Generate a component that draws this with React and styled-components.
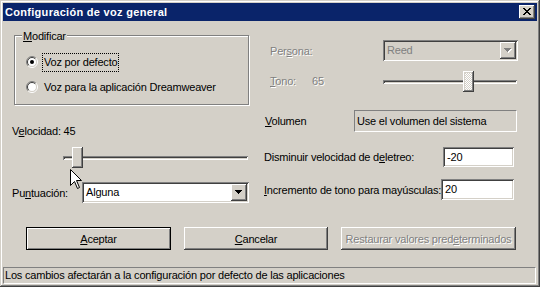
import React from "react";
import styled, { createGlobalStyle, css } from "styled-components";

const GlobalStyle = createGlobalStyle`
  html, body { margin: 0; padding: 0; background: #d4d0c8; overflow: hidden; }
  #root { width: 540px; height: 287px; }
`;

const raised = css`
  box-shadow: inset -1px -1px #404040, inset 1px 1px #fff, inset -2px -2px #808080, inset 2px 2px #d4d0c8;
`;
const sunken = css`
  box-shadow: inset 1px 1px #808080, inset -1px -1px #fff, inset 2px 2px #404040, inset -2px -2px #d4d0c8;
`;
const disabledText = css`
  color: #808080;
  text-shadow: 1px 1px #fff;
`;

const Window = styled.div`
  position: relative;
  box-sizing: border-box;
  width: 540px;
  height: 287px;
  padding: 3px;
  background: #d4d0c8;
  display: flex;
  flex-direction: column;
  box-shadow: inset -1px -1px #404040, inset 1px 1px #d4d0c8, inset -2px -2px #808080, inset 2px 2px #fff;
  font-family: "Liberation Sans", Arial, sans-serif;
  font-size: 11px;
  letter-spacing: -0.2px;
  color: #000;
  white-space: nowrap;
`;

const TitleBar = styled.div`
  flex: none;
  height: 18px;
  background: #0a246a;
  color: #fff;
  display: flex;
  align-items: center;
  justify-content: space-between;
  padding: 0 2px;
`;

const TitleText = styled.span`
  font-weight: bold;
  letter-spacing: 0.3px;
  line-height: 18px;
`;

const CloseButton = styled.div`
  width: 16px;
  height: 14px;
  background: #d4d0c8;
  ${raised};
  display: flex;
  align-items: center;
  justify-content: center;
  padding-bottom: 1px;
  box-sizing: border-box;
`;

const Main = styled.div`
  flex: none;
  height: 206px;
  display: flex;
  padding-left: 9px;
`;

const LeftCol = styled.div`
  width: 238px;
  display: flex;
  flex-direction: column;
`;

const RightCol = styled.div`
  width: 255px;
  margin-left: 13px;
  display: flex;
  flex-direction: column;
`;

const GroupBox = styled.div`
  position: relative;
  box-sizing: border-box;
  margin: 14px 0 0 2px;
  width: 235px;
  height: 70px;
  border: 1px solid #808080;
  box-shadow: inset 1px 1px #fff, 1px 1px #fff;
  padding: 17px 0 0 11px;
  display: flex;
  flex-direction: column;
  gap: 7px;
`;

const Legend = styled.span`
  position: absolute;
  top: -6px;
  left: 7px;
  padding: 0 1px;
  background: #d4d0c8;
  line-height: 13px;
`;

const RadioRow = styled.div`
  display: flex;
  align-items: center;
  height: 18px;
  gap: 5px;
`;

const RadioLabel = styled.span`
  padding: 1px 1px;
  line-height: 15px;
  outline: ${(p) => (p.$focused ? "1px dotted #000" : "none")};
`;

const U = styled.span`
  text-decoration: underline;
  text-underline-offset: 1px;
`;

const FieldLabel = styled.div`
  margin-top: ${(p) => p.$mt}px;
  line-height: 14px;
`;

const SliderWrap = styled.div`
  position: relative;
  flex: none;
  height: 22px;
  width: ${(p) => p.$w}px;
  margin-left: ${(p) => p.$ml || 0}px;
  margin-top: ${(p) => p.$mt || 0}px;
  display: flex;
  align-items: center;
`;

const Track = styled.div`
  width: 100%;
  height: 4px;
  margin-top: 1px;
  ${sunken};
`;

const Thumb = styled.div`
  position: absolute;
  top: 1px;
  left: ${(p) => p.$pos}px;
  width: 11px;
  height: 21px;
  box-sizing: border-box;
  background: #d4d0c8;
  ${(p) =>
    p.$disabled &&
    css`
      background-image: repeating-conic-gradient(#fff 0 25%, #d4d0c8 0 50%);
      background-size: 2px 2px;
    `}
  ${raised};
`;

const Row = styled.div`
  display: flex;
  align-items: center;
  flex: none;
  margin-top: ${(p) => p.$mt}px;
  height: ${(p) => p.$h}px;
`;

const RowLabel = styled.div`
  flex: none;
  box-sizing: border-box;
  width: ${(p) => p.$w}px;
  padding-left: ${(p) => p.$pl || 0}px;
  line-height: 14px;
  display: flex;
  white-space: nowrap;
  ${(p) => p.$disabled && disabledText};
`;

const TonoName = styled.span`
  width: 42px;
`;

const Combo = styled.div`
  box-sizing: border-box;
  width: ${(p) => p.$w}px;
  height: 21px;
  padding: 2px;
  display: flex;
  background: ${(p) => (p.$disabled ? "#d4d0c8" : "#fff")};
  ${sunken};
`;

const ComboText = styled.span`
  flex: 1;
  padding-left: 2px;
  line-height: 17px;
  color: ${(p) => (p.$disabled ? "#808080" : "#000")};
`;

const DropButton = styled.div`
  width: 16px;
  height: 17px;
  box-sizing: border-box;
  background: #d4d0c8;
  ${raised};
  display: flex;
  align-items: center;
  justify-content: center;
`;

const StaticBox = styled.div`
  box-sizing: border-box;
  width: ${(p) => p.$w}px;
  height: 22px;
  border-top: 1px solid #808080;
  border-left: 1px solid #808080;
  border-bottom: 1px solid #fff;
  border-right: 1px solid #fff;
  padding-left: 2px;
  line-height: 20px;
`;

const TextInput = styled.div`
  box-sizing: border-box;
  width: ${(p) => p.$w}px;
  height: ${(p) => p.$h}px;
  background: #fff;
  padding-left: 4px;
  line-height: ${(p) => p.$h}px;
  ${sunken};
`;

const ButtonRow = styled.div`
  flex: none;
  display: flex;
  gap: 13px;
  padding-left: 23px;
  height: 23px;
`;

const Button = styled.div`
  box-sizing: border-box;
  width: ${(p) => p.$w}px;
  height: 23px;
  display: flex;
  align-items: center;
  justify-content: center;
  background: #d4d0c8;
  ${(p) =>
    p.$default
      ? css`
          border: 1px solid #000;
          box-shadow: inset 1px 1px #fff, inset -1px -1px #808080;
        `
      : raised};
  ${(p) => p.$disabled && disabledText};
`;

const StatusBar = styled.div`
  margin-top: auto;
  margin-right: 1px;
  flex: none;
  box-sizing: border-box;
  height: 17px;
  border-top: 1px solid #808080;
  border-left: 1px solid #808080;
  border-bottom: 1px solid #fff;
  border-right: 1px solid #fff;
  padding-left: 1px;
  line-height: 15px;
`;

const Cursor = styled.svg`
  position: absolute;
  left: 70px;
  top: 169px;
`;

const CloseGlyph = () => (
  <svg width="8" height="7" viewBox="0 0 8 7" shapeRendering="crispEdges">
    {[
      [0, 0, 2], [6, 0, 2],
      [1, 1, 2], [5, 1, 2],
      [2, 2, 4],
      [3, 3, 2],
      [2, 4, 4],
      [1, 5, 2], [5, 5, 2],
      [0, 6, 2], [6, 6, 2],
    ].map(([x, y, w], i) => (
      <rect key={i} x={x} y={y} width={w} height="1" fill="#000" />
    ))}
  </svg>
);

const Arrow = ({ disabled }) => (
  <svg width="8" height="5" viewBox="0 0 8 5" shapeRendering="crispEdges">
    {disabled &&
      [0, 1, 2, 3].map((r) => (
        <rect key={"s" + r} x={r + 1} y={r + 1} width={7 - r * 2} height="1" fill="#fff" />
      ))}
    {[0, 1, 2, 3].map((r) => (
      <rect key={r} x={r} y={r} width={7 - r * 2} height="1" fill={disabled ? "#808080" : "#000"} />
    ))}
  </svg>
);

const Radio = ({ checked }) => (
  <svg width="12" height="12" viewBox="0 0 12 12">
    <circle cx="6" cy="6" r="4.5" fill="#fff" />
    <path d="M2.1 9.9 A5.5 5.5 0 0 1 9.9 2.1" stroke="#808080" fill="none" />
    <path d="M9.9 2.1 A5.5 5.5 0 0 1 2.1 9.9" stroke="#fff" fill="none" />
    <path d="M2.8 9.2 A4.5 4.5 0 0 1 9.2 2.8" stroke="#404040" fill="none" />
    <path d="M9.2 2.8 A4.5 4.5 0 0 1 2.8 9.2" stroke="#d4d0c8" fill="none" />
    {checked && <circle cx="6" cy="6" r="2" fill="#000" />}
  </svg>
);

export default function App() {
  return (
    <>
      <GlobalStyle />
      <Window>
        <TitleBar>
          <TitleText>Configuración de voz general</TitleText>
          <CloseButton>
            <CloseGlyph />
          </CloseButton>
        </TitleBar>

        <Main>
          <LeftCol>
            <GroupBox>
              <Legend>
                <U>M</U>odificar
              </Legend>
              <RadioRow>
                <Radio checked />
                <RadioLabel $focused>Voz por defecto</RadioLabel>
              </RadioRow>
              <RadioRow>
                <Radio />
                <RadioLabel>Voz para la aplicación Dreamweaver</RadioLabel>
              </RadioRow>
            </GroupBox>

            <FieldLabel $mt={19}>
              V<U>e</U>locidad: 45
            </FieldLabel>
            <SliderWrap $w={185} $ml={51} $mt={8}>
              <Track />
              <Thumb $pos={9} />
            </SliderWrap>

            <Row $mt={14} $h={21}>
              <RowLabel $w={70}>
                <span>
                  Pu<U>n</U>tuación:
                </span>
              </RowLabel>
              <Combo $w={167}>
                <ComboText>Alguna</ComboText>
                <DropButton>
                  <Arrow />
                </DropButton>
              </Combo>
            </Row>
          </LeftCol>

          <RightCol>
            <Row $mt={19} $h={21}>
              <RowLabel $w={120} $pl={7} $disabled>
                <span>
                  Per<U>s</U>ona:
                </span>
              </RowLabel>
              <Combo $w={135} $disabled>
                <ComboText $disabled>Reed</ComboText>
                <DropButton>
                  <Arrow disabled />
                </DropButton>
              </Combo>
            </Row>

            <Row $mt={9} $h={22}>
              <RowLabel $w={120} $pl={7} $disabled>
                <TonoName>
                  <U>T</U>ono:
                </TonoName>
                <span>65</span>
              </RowLabel>
              <SliderWrap $w={134}>
                <Track />
                <Thumb $pos={80} $disabled />
              </SliderWrap>
            </Row>

            <Row $mt={18} $h={22}>
              <RowLabel $w={91} $pl={2}>
                <span>
                  <U>V</U>olumen
                </span>
              </RowLabel>
              <StaticBox $w={163}>Use el volumen del sistema</StaticBox>
            </Row>

            <Row $mt={15} $h={20}>
              <RowLabel $w={180} $pl={1}>
                <span>
                  Disminuir velocidad de d<U>e</U>letreo:
                </span>
              </RowLabel>
              <TextInput $w={71} $h={20}>-20</TextInput>
            </Row>

            <Row $mt={12} $h={21}>
              <RowLabel $w={178} $pl={1}>
                <span>
                  <U>I</U>ncremento de tono para mayúsculas:
                </span>
              </RowLabel>
              <TextInput $w={73} $h={21}>20</TextInput>
            </Row>
          </RightCol>
        </Main>

        <ButtonRow>
          <Button $w={145} $default>
            <span>
              <U>A</U>ceptar
            </span>
          </Button>
          <Button $w={144}>
            <span>
              <U>C</U>ancelar
            </span>
          </Button>
          <Button $w={175} $disabled>
            <span>
              Restaurar valores pred<U>e</U>terminados
            </span>
          </Button>
        </ButtonRow>

        <StatusBar>Los cambios afectarán a la configuración por defecto de las aplicaciones</StatusBar>

        <Cursor width="13" height="21" viewBox="0 0 13 21">
          <path
            d="M0.5 0.5 V16.5 L4.5 12.5 L7.5 19.5 L9.5 18.5 L6.5 11.5 H11.5 Z"
            fill="#fff"
            stroke="#000"
            strokeLinejoin="miter"
          />
        </Cursor>
      </Window>
    </>
  );
}
